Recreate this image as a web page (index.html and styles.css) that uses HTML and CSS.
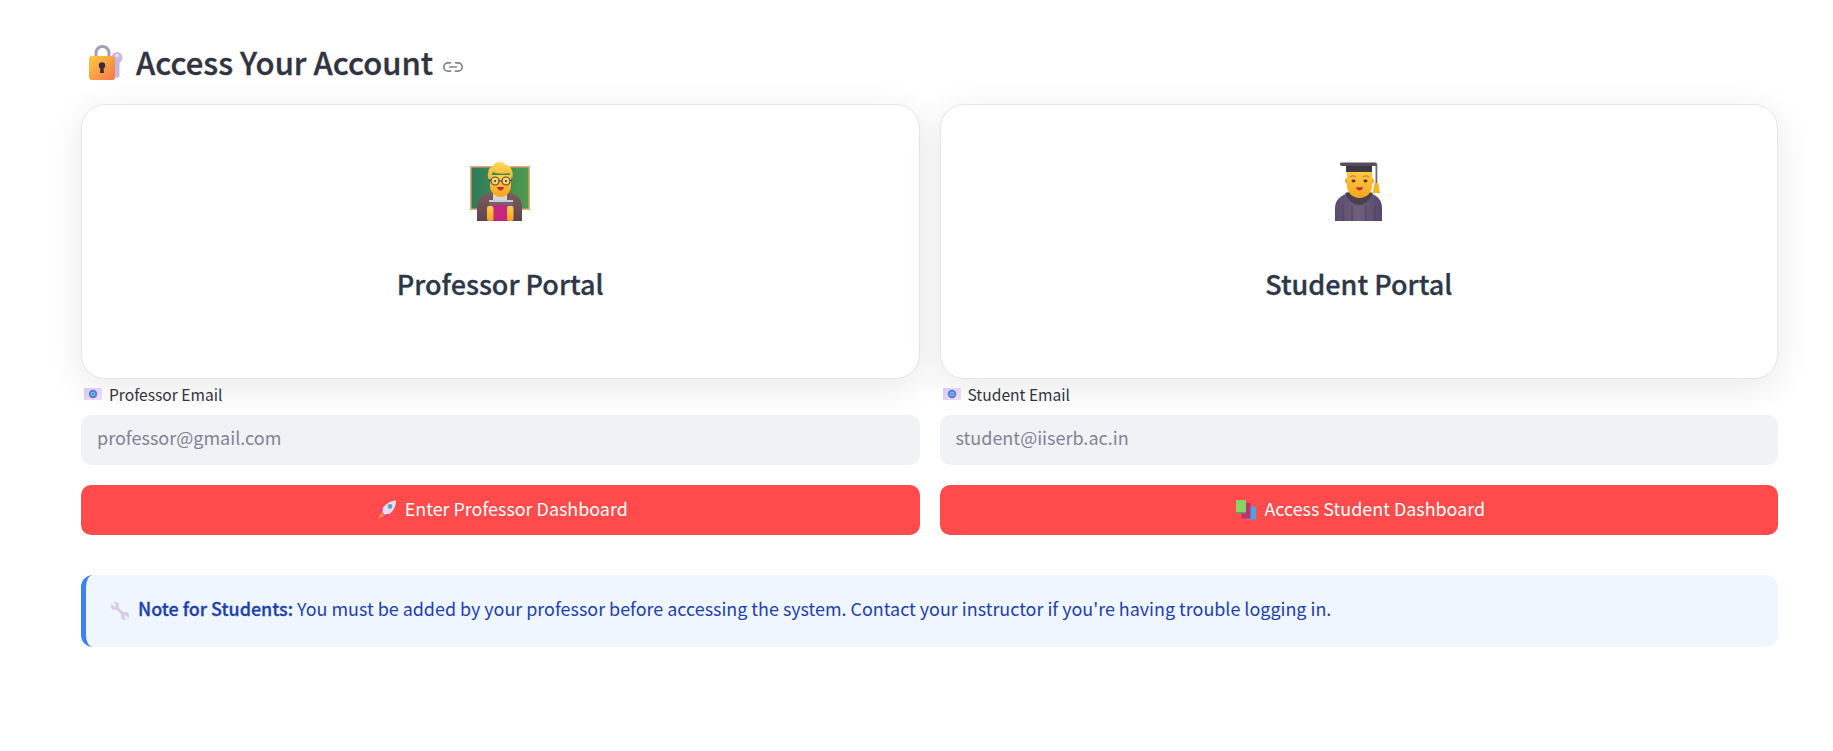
FILE: index.html
```html
<!DOCTYPE html>
<html lang="en">
<head>
<meta charset="utf-8">
<title>Access Your Account</title>
<link rel="stylesheet" href="styles.css">
</head>
<body>
<svg class="defs" width="0" height="0" aria-hidden="true">
  <defs>
    <linearGradient id="skin" x1="0" y1="0" x2="0" y2="1"><stop offset="0" stop-color="#ffcf4a"/><stop offset="1" stop-color="#f7a41a"/></linearGradient>
    <linearGradient id="hair" x1="0" y1="0" x2="0" y2="1"><stop offset="0" stop-color="#ffd95a"/><stop offset="1" stop-color="#f9b52e"/></linearGradient>
    <linearGradient id="lockBody" x1="0" y1="0" x2="1" y2="1"><stop offset="0" stop-color="#ffc93f"/><stop offset="1" stop-color="#f5784a"/></linearGradient>
    <linearGradient id="board" x1="0" y1="0" x2="1" y2="0"><stop offset="0" stop-color="#2f7a5a"/><stop offset="1" stop-color="#4f9a4d"/></linearGradient>
    <linearGradient id="gown" x1="0" y1="0" x2="1" y2="0"><stop offset="0" stop-color="#5b4a6e"/><stop offset="0.5" stop-color="#6f5f7c"/><stop offset="1" stop-color="#57476c"/></linearGradient>
    <linearGradient id="coat" x1="0" y1="0" x2="0" y2="1"><stop offset="0" stop-color="#7d5c58"/><stop offset="1" stop-color="#5f4350"/></linearGradient>
    <linearGradient id="mailBg" x1="0" y1="0" x2="1" y2="1"><stop offset="0" stop-color="#d9c8f0"/><stop offset="1" stop-color="#f0dcf2"/></linearGradient>
    <symbol id="mail" viewBox="0 0 18 12">
      <rect width="18" height="12" fill="url(#mailBg)"/>
      <circle cx="9" cy="6" r="4.200" fill="#4a7fd8"/>
      <circle cx="9" cy="6" r="1.800" fill="none" stroke="#a8c6f2" stroke-width="1"/>
    </symbol>
  </defs>
</svg>

<main class="page">
  <h2 class="heading">
    <svg class="icon-lock" viewBox="0 0 37 37" aria-hidden="true">
      <path d="M9 13V8a6.500 6.500 0 0 1 13 0V13" fill="none" stroke="#a79db5" stroke-width="3"/>
      <circle cx="30" cy="12.500" r="5.500" fill="#cbb8e4"/>
      <circle cx="30" cy="10.500" r="1.500" fill="#f3edf9"/>
      <path d="M27.500 15h5v16l-2.500 2.500-2.500-2.500z" fill="#c7b6de"/>
      <rect x="2" y="11" width="26" height="24" rx="3" fill="url(#lockBody)"/>
      <circle cx="15" cy="20.500" r="3.200" fill="#3a2a40"/>
      <path d="M13.700 21h2.600l.7 7h-4z" fill="#3a2a40"/>
    </svg>
    <span class="heading-text">Access Your Account</span>
    <svg class="icon-link" viewBox="0 0 24 24" aria-hidden="true">
      <path d="M15 7h3a5 5 0 0 1 0 10h-3m-6 0H6A5 5 0 0 1 6 7h3"/>
      <path d="M8 12h8"/>
    </svg>
  </h2>

  <div class="columns">
    <section class="column">
      <div class="card">
        <svg class="emoji" viewBox="0 0 60 60" aria-hidden="true">
          <rect x="0" y="4" width="60" height="44" fill="#e8ab7c"/>
          <rect x="1.500" y="5.500" width="57" height="41" fill="url(#board)"/>
          <path d="M7 59V45c0-8 6-13 13-14h20c7 1 12 6 12 14v14z" fill="url(#coat)"/>
          <path d="M23 32h14v8H23z" fill="#d9d4d6"/>
          <path d="M20 13h21v11c0 6-5 11-10.500 11S20 30 20 24z" fill="url(#skin)"/>
          <path d="M18.500 17c-1-3-1-5 0-7-.5-3 2-5 4-5 1-3 3-5 7-5 3 0 5 1 6 3 3 0 6 2 6 5 1.500 2 1.500 5 .5 9-1-3-2-5-3-6-5 1-12 1-16-1-1 2-2 4-2 7h-2.500z" fill="url(#hair)"/>
          <circle cx="25" cy="19" r="4" fill="#fff4" stroke="#54463f" stroke-width="1.200"/>
          <circle cx="36" cy="19" r="4" fill="#fff4" stroke="#54463f" stroke-width="1.200"/>
          <path d="M29 19h3M21 18.500h-2M40 18.500h2" stroke="#54463f" stroke-width="1.200"/>
          <circle cx="25" cy="19" r="1.100" fill="#4b3b35"/>
          <circle cx="36" cy="19" r="1.100" fill="#4b3b35"/>
          <path d="M27 25h7c-.5 2.500-2 3.500-3.500 3.500S27.500 27.500 27 25z" fill="#c4264f"/>
          <rect x="19" y="38" width="24" height="6" fill="#6d6572"/>
          <rect x="19" y="38" width="24" height="2" fill="#cfcbd2"/>
          <rect x="22" y="43" width="16" height="16" fill="#c6267e"/>
          <rect x="17" y="44" width="6.500" height="15" rx="2" fill="url(#skin)"/>
          <rect x="37" y="44" width="6.500" height="15" rx="2" fill="url(#skin)"/>
        </svg>
        <h3 class="card-title">Professor Portal</h3>
      </div>
      <label class="field-label"><svg class="icon-mail" aria-hidden="true"><use href="#mail"/></svg>Professor Email</label>
      <input class="text-input" type="text" placeholder="professor@gmail.com">
      <button class="primary-btn" type="button">
        <svg class="btn-icon" viewBox="0 0 20 20" aria-hidden="true">
          <path d="M4 11C7 5 12 1 19 .5 19 8 15 13 9 16z" fill="#e6dfe9"/>
          <circle cx="13" cy="6.500" r="2.400" fill="#5aa0e6"/>
          <path d="M5.500 7.500 1 11l3 2 2-2zM12.500 14 9 19l-2-3 2-2z" fill="#ef3f8f"/>
          <path d="M4.500 13 1 19l6-3.500z" fill="#f7a13b"/>
        </svg><span>Enter Professor Dashboard</span>
      </button>
    </section>

    <section class="column">
      <div class="card">
        <svg class="emoji" viewBox="0 0 60 60" aria-hidden="true">
          <path d="M6 59V46c0-8 6-13 14-15h20c8 2 13 7 13 15v13z" fill="url(#gown)"/>
          <path d="M14 43v16M23 44v15M37 44v15M46 43v16" stroke="#4f4060" stroke-width="1"/>
          <path d="M16 31c4-1 8-2 14-2s10 1 14 2c-3 7-8 12-14 12S19 38 16 31z" fill="#4a4150"/>
          <path d="M19 16c-2 0-3 1-3 3s2 3 3 3zM42 16c2 0 3 1 3 3s-2 3-3 3z" fill="#f5a623"/>
          <path d="M18 6h25v18c0 7-6 12-12.500 12S18 31 18 24z" fill="url(#skin)"/>
          <path d="M21 15c2-1.500 4-1.500 6 0M34 15c2-1.500 4-1.500 6 0" stroke="#d9821e" stroke-width="1.400" fill="none"/>
          <ellipse cx="24.500" cy="19" rx="2" ry="1.400" fill="#4b3b35"/>
          <ellipse cx="36.500" cy="19" rx="2" ry="1.400" fill="#4b3b35"/>
          <path d="M27 25c2 .6 5 .6 7 0-.5 2.500-2 3.500-3.500 3.500S27.500 27.500 27 25z" fill="#c4264f"/>
          <path d="M17 3h26v7H17z" fill="#3f3947"/>
          <rect x="11" y="0.500" width="37" height="3.500" rx="1.700" fill="#544e5c"/>
          <rect x="46.500" y="2" width="1.800" height="19" fill="#6e6878"/>
          <path d="M45.500 21h3.800l1.700 10h-7.200z" fill="#f7b51e"/>
        </svg>
        <h3 class="card-title">Student Portal</h3>
      </div>
      <label class="field-label"><svg class="icon-mail" aria-hidden="true"><use href="#mail"/></svg>Student Email</label>
      <input class="text-input" type="text" placeholder="student@iiserb.ac.in">
      <button class="primary-btn" type="button">
        <svg class="btn-icon" viewBox="0 0 20 20" aria-hidden="true">
          <rect x="10" y="6.500" width="10" height="13" rx="0.500" fill="#4aa3e6"/>
          <rect x="5.500" y="3" width="9" height="15.500" fill="#c62f6f"/>
          <rect x="0" y="0" width="10" height="13" fill="#86d466"/>
          <rect x="0" y="12" width="10" height="1.500" fill="#5f9e6a"/>
        </svg><span>Access Student Dashboard</span>
      </button>
    </section>
  </div>

  <aside class="note">
    <svg class="note-icon" viewBox="0 0 18 18" aria-hidden="true">
      <path d="M4 4 14 14" stroke="#d9cbe8" stroke-width="2.800"/>
      <circle cx="4" cy="4" r="4" fill="#d9cbe8"/>
      <circle cx="14" cy="14" r="4" fill="#d9cbe8"/>
      <path d="M0 1 3 0 5 4 3.500 5z" fill="#eff6ff"/>
      <path d="M18 17 15 18 13 14 14.500 13z" fill="#eff6ff"/>
    </svg>
    <p class="note-text"><strong>Note for Students:</strong> You must be added by your professor before accessing the system. Contact your instructor if you're having trouble logging in.</p>
  </aside>
</main>
</body>
</html>
```

FILE: styles.css
```css
* { box-sizing: border-box; }

html, body {
  margin: 0;
  background: #fff;
}

body {
  font-family: "Noto Sans CJK SC", "Noto Sans", sans-serif;
  color: #31333f;
}

.defs { position: absolute; }

.page {
  padding: 45px 55px 0 81px;
}

.heading {
  display: flex;
  align-items: center;
  margin: 0 0 22px 6px;
  height: 37px;
  font-size: 31px;
  line-height: 37px;
  font-weight: 500;
  -webkit-text-stroke: 0.35px currentColor;
  color: #31333f;
}

.icon-lock { width: 37px; height: 37px; margin-right: 12px; flex: none; }

.heading-text { white-space: nowrap; padding-bottom: 4px; }

.icon-link {
  width: 20px;
  height: 20px;
  margin: 7px 0 0 10px;
  fill: none;
  stroke: #808495;
  stroke-width: 2;
  stroke-linecap: round;
  stroke-linejoin: round;
}

.columns {
  display: grid;
  grid-template-columns: 1fr 1fr;
  gap: 20px;
}

.column { display: flex; flex-direction: column; min-width: 0; }

.card {
  display: flex;
  flex-direction: column;
  align-items: center;
  height: 275px;
  padding-top: 57px;
  background: #fff;
  border: 1px solid #e6e6e9;
  border-radius: 24px;
  box-shadow: 0 8px 36px rgba(0, 0, 0, 0.09);
}

.emoji { width: 60px; height: 60px; flex: none; }

.card-title {
  margin: 42px 0 0;
  font-size: 27px;
  line-height: 40px;
  font-weight: 500;
  -webkit-text-stroke: 0.3px currentColor;
  color: #2d3748;
}

.field-label {
  display: flex;
  align-items: center;
  height: 36px;
  padding: 0 0 6px 3px;
  font-size: 15.6px;
  line-height: 24px;
  color: #31333f;
}

.icon-mail { width: 18px; height: 12px; margin-right: 7px; flex: none; }

.text-input {
  display: block;
  width: 100%;
  height: 50px;
  padding: 0 16px 7px;
  border: 0;
  outline: 0;
  border-radius: 10px;
  background: #f0f2f6;
  font: 400 18px/28px "Noto Sans CJK SC", "Noto Sans", sans-serif;
  color: #31333f;
}

.text-input::placeholder { color: #808495; opacity: 1; }

.primary-btn {
  display: flex;
  align-items: center;
  justify-content: center;
  width: 100%;
  height: 50px;
  margin-top: 20px;
  padding: 0 0 0 4px;
  border: 0;
  border-radius: 10px;
  background: #ff4b4b;
  color: #fff;
  font: 400 17.92px/28px "Noto Sans CJK SC", "Noto Sans", sans-serif;
}

.primary-btn span { padding-bottom: 5px; }

.btn-icon { width: 20px; height: 20px; margin-right: 8px; flex: none; }

.note {
  display: flex;
  align-items: center;
  height: 72px;
  margin-top: 40px;
  padding-left: 25px;
  background: #eff6ff;
  border-left: 5px solid #3b82f6;
  border-radius: 12px;
  color: #1e40af;
}

.note-icon { width: 18px; height: 18px; margin-right: 9px; flex: none; }

.note-text {
  margin: 0;
  padding-bottom: 7px;
  font-size: 17.92px;
  line-height: 28px;
}

.note-text strong { font-weight: 500; -webkit-text-stroke: 0.3px currentColor; }
```
